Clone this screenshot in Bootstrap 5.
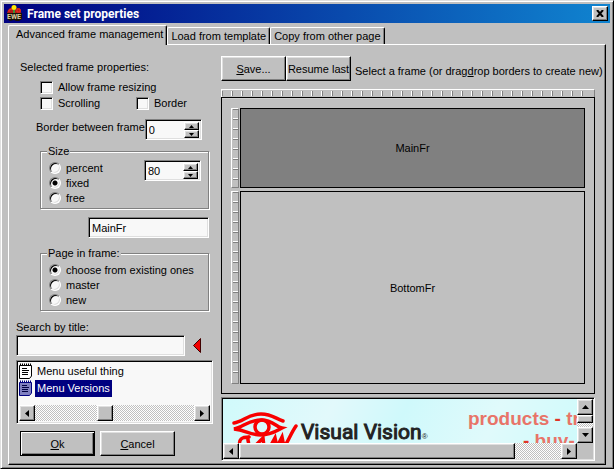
<!DOCTYPE html>
<html lang="en">
<head>
<meta charset="utf-8">
<meta name="viewport" content="width=device-width, initial-scale=1">
<title>Frame set properties</title>
<link href="https://cdn.jsdelivr.net/npm/bootstrap@5.3.0/dist/css/bootstrap.min.css" rel="stylesheet">
<style>
:root{--face:#c0c0c0;--shade:#808080;--field:#f8f8f8}
body{font:11px/16px "Liberation Sans",Arial,sans-serif;color:#000;background:var(--face)}
button,input{font:inherit;color:#000;border-radius:0}
svg{display:block}
.win{min-height:100vh;border:1px solid;border-color:#dfdfdf #000 #000 #dfdfdf;box-shadow:inset 1px 1px #fff,inset -1px -1px var(--shade);padding:3px}
.titlebar{height:19px;background:linear-gradient(90deg,#000080,#1084d0);color:#fff;font:bold 12px/16px Roboto,"Liberation Sans",sans-serif;padding:0 2px}
.raised{background:var(--face);border:1px solid;border-color:#fff #000 #000 #fff;box-shadow:inset -1px -1px var(--shade),inset 1px 1px #dfdfdf;padding:0}
.sunken{background:var(--field);border:1px solid;border-color:var(--shade) #fff #fff var(--shade);box-shadow:inset 1px 1px #000,inset -1px -1px #dfdfdf;border-radius:0}
.closer{width:16px;height:15px}
.tabs{padding:2px 4px 0}
.tabs button{background:var(--face);border:1px solid;border-color:#fff #000 transparent #fff;border-bottom:0;border-radius:2px 2px 0 0;box-shadow:inset -1px 0 var(--shade);height:17px;padding:0 3px;line-height:17px;white-space:nowrap}
.tabs .active{height:20px;margin-bottom:-1px;padding:0 3px 3px 7px;position:relative}
.pane{border:1px solid;border-color:#fff #000 #000 #fff;box-shadow:inset -1px -1px var(--shade);margin:0 4px;padding:0 10px 1px 7px;gap:8px}
.side{width:197px;flex:none;padding:14px 0 7px;white-space:nowrap}
.inset24{margin-left:24px;width:169px}
.border-row{margin-left:20px;width:165px}
.half{width:96px}
.tick{appearance:none;width:13px;height:13px;margin:0 5px 0 0}
.dot{appearance:none;width:12px;height:12px;margin:0 5px 0 0;border-radius:50%;background:var(--field);border:1px solid;border-color:var(--shade) #fff #fff var(--shade);box-shadow:inset 1px 1px #000,inset -1px -1px #dfdfdf}
.dot:checked{background:radial-gradient(circle,#000 2px,var(--field) 3px)}
.group{border:1px solid var(--shade);box-shadow:1px 1px #fff,inset 1px 1px #fff;padding:2px 7px 3px 8px}
.group legend{font-size:11px;line-height:14px;background:var(--face);padding:0 1px;margin:0 0 0 -2px}
.group label{height:15px}
.spin{width:57px;height:21px;padding:2px}
.spin input{width:0;flex:1;border:0;background:transparent;padding:0 0 0 1px;outline:0;line-height:16px}
.spin button{width:15px;height:8px;display:grid;place-items:center}
.field{height:21px;padding:0 3px;outline:0}
.name-field{width:121px}
.search{width:169px}
.list{height:64px;padding:2px}
.item{height:17px;gap:3px}
.item span{padding:0 2px;line-height:17px}
.item .chosen{background:#000080;color:#fff}
.track{background:repeating-conic-gradient(#fff 0 25%,var(--face) 0 50%) 0 0/2px 2px}
.arrow{width:16px;height:16px;flex:none;display:grid;place-items:center}
.knob{margin-left:62px}
.actions{margin-top:7px;gap:5px}
.cmd{width:75px;height:25px}
.primary{border-color:#000;box-shadow:inset 1px 1px #fff,inset -1px -1px #000,inset -2px -2px var(--shade)}
.work{min-width:0;padding:11px 0 2px}
.tool{width:65px;height:25px;white-space:nowrap}
.hint{margin:7px 0 0 4px;white-space:nowrap}
.ruler-x{height:8px;margin-top:8px;border-top:1px solid #fff;border-left:1px solid #fff;border-right:1px solid var(--shade);background:linear-gradient(90deg,#fff 1px,var(--shade) 1px 2px,transparent 2px) 9px 0/10px 5px;background-clip:content-box;background-origin:content-box;padding:1px 9px 1px 0}
.ruler-y{width:8px;border-left:1px solid #fff;border-top:1px solid #fff;border-bottom:1px solid var(--shade);border-right:1px solid var(--shade);background:linear-gradient(#fff 1px,var(--shade) 1px 2px,transparent 2px) 0 9px/5px 10px;background-clip:content-box;background-origin:content-box;padding:0 0 4px 1px}
.canvas{border:1px solid #000;padding:10px 9px 9px;gap:3px;box-shadow:inset 0 1px #d0d0d0}
.pane-row{gap:1px}
.top-row{height:80px;flex:none}
.frame-box{border:1px solid #000;background:var(--face);padding:0}
.top-row .frame-box{background:var(--shade)}
.preview{height:64px;margin-top:3px;padding:1px;display:grid;grid-template:minmax(0,1fr) 16px/minmax(0,1fr) 16px}
.page{background:linear-gradient(115deg,#d0fafb,#e2f9fb 30%,#cff9fb 50%,#e0fafb 75%,#cffafb);overflow:hidden}
.brand{font:21px/24px Roboto,"Liberation Sans",sans-serif;color:#222;-webkit-text-stroke:1px #222;white-space:nowrap;margin:21px 0 0 2px}
.brand small{font:8px/10px "Liberation Sans",sans-serif;-webkit-text-stroke:0}
.promo{font:bold 19px/22px "Liberation Sans",sans-serif;color:#e87468;white-space:nowrap;margin:9px 0 0 auto;width:109px;flex:none}
.promo b{color:#e03428}
.promo div + div{padding-left:55px}
</style>
<script src="https://cdn.jsdelivr.net/npm/bootstrap@5.3.0/dist/js/bootstrap.bundle.min.js"></script>
</head>
<body>
<main class="win d-flex flex-column">
  <header class="titlebar d-flex align-items-center">
    <svg width="17" height="17" viewBox="0 0 17 17" aria-hidden="true">
      <path d="M2 5L4 3H6L7 5H10L11 3H13L15 5V8L12 10H3L1 8Z" fill="#b01818"/>
      <path d="M3 7V5L6 4M11 4H14V7H11Z" stroke="#f03020" fill="none"/>
      <circle cx="8" cy="2.500" r="2.500" fill="#ffe800"/>
      <path d="M7 5H9V8H7Z" fill="#409030"/>
      <path d="M1 8H16V14L13 16H10L8 15L4 16L1 14Z" fill="#181008"/>
      <text x="1" y="14" font-size="7" font-weight="700" fill="#d8c8a0">EWE</text>
    </svg>
    <span class="ms-1 flex-grow-1">Frame set properties</span>
    <button class="raised closer d-flex align-items-center justify-content-center" type="button" aria-label="Close"><svg width="8" height="7" viewBox="0 0 8 7"><path d="M1 0L7 7M7 0L1 7" stroke="#000" stroke-width="2"/></svg></button>
  </header>
  <nav class="tabs d-flex align-items-end" role="tablist" aria-label="Frame sources">
    <button class="active" type="button" role="tab" aria-selected="true">Advanced frame management</button>
    <button type="button" role="tab" aria-selected="false">Load from template</button>
    <button type="button" role="tab" aria-selected="false">Copy from other page</button>
  </nav>
  <section class="pane d-flex flex-grow-1">
    <form class="side d-flex flex-column">
      <div class="ms-1">Selected frame properties:</div>
      <div class="inset24 mt-1 d-flex flex-wrap">
        <label class="d-flex align-items-center w-100"><input class="tick sunken" type="checkbox">Allow frame resizing</label>
        <label class="d-flex align-items-center half"><input class="tick sunken" type="checkbox">Scrolling</label>
        <label class="d-flex align-items-center"><input class="tick sunken" type="checkbox">Border</label>
      </div>
      <div class="border-row mt-2 d-flex justify-content-between">
        <label for="gap">Border between frame</label>
        <div class="spin sunken d-flex flex-shrink-0"><input id="gap" type="text" value="0"><div><button class="raised" type="button" aria-label="Increase border"><svg width="5" height="3"><path d="M0 3H5L2.5 0Z"/></svg></button><button class="raised" type="button" aria-label="Decrease border"><svg width="5" height="3"><path d="M0 0H5L2.5 3Z"/></svg></button></div></div>
      </div>
      <fieldset class="group inset24 mt-1">
        <legend class="float-none w-auto">Size</legend>
        <div class="d-flex justify-content-between">
          <div>
            <label class="d-flex align-items-center"><input class="dot" type="radio" name="size">percent</label>
            <label class="d-flex align-items-center"><input class="dot" type="radio" name="size" checked>fixed</label>
            <label class="d-flex align-items-center"><input class="dot" type="radio" name="size">free</label>
          </div>
          <div class="spin sunken d-flex"><input type="text" value="80" aria-label="Size value"><div><button class="raised" type="button" aria-label="Increase size"><svg width="5" height="3"><path d="M0 3H5L2.5 0Z"/></svg></button><button class="raised" type="button" aria-label="Decrease size"><svg width="5" height="3"><path d="M0 0H5L2.5 3Z"/></svg></button></div></div>
        </div>
      </fieldset>
      <div class="inset24 mt-2 d-flex justify-content-end"><input class="field name-field sunken" type="text" value="MainFr" aria-label="Frame name"></div>
      <fieldset class="group inset24 mt-2">
        <legend class="float-none w-auto">Page in frame:</legend>
        <label class="d-flex align-items-center"><input class="dot" type="radio" name="page" checked>choose from existing ones</label>
        <label class="d-flex align-items-center"><input class="dot" type="radio" name="page">master</label>
        <label class="d-flex align-items-center"><input class="dot" type="radio" name="page">new</label>
      </fieldset>
      <label for="find" class="mt-2">Search by title:</label>
      <div class="d-flex align-items-center">
        <input id="find" class="field sunken search" type="text">
        <svg class="ms-2" width="8" height="15" viewBox="0 0 8 15" aria-hidden="true"><path d="M7.5 .5V14.5L.5 7.5Z" fill="#f00000" stroke="#400000"/></svg>
      </div>
      <div class="list sunken mt-1 d-flex flex-column">
        <div class="item d-flex"><svg width="13" height="16" viewBox="0 0 13 16"><path d="M.5 2.5H12.5V13L10.5 15.5H.5Z" fill="#fff" stroke="#000"/><path d="M1 1.5H12" stroke="#000" stroke-width="2" stroke-dasharray="1 1"/><path d="M3 5.5H8M3 7.500H10M3 9.500H9M3 11.500H9" stroke="#000"/></svg><span>Menu useful thing</span></div>
        <div class="item d-flex"><svg width="13" height="16" viewBox="0 0 13 16"><path d="M.5 2.5H12.5V13L10.5 15.5H.5Z" fill="#8080c0" stroke="#000080"/><path d="M1 1.5H12" stroke="#000080" stroke-width="2" stroke-dasharray="1 1"/><path d="M3 5.5H8M3 7.500H10M3 9.500H9M3 11.500H9" stroke="#000040"/></svg><span class="chosen">Menu Versions</span></div>
        <div class="track d-flex mt-auto">
          <button class="raised arrow" type="button" aria-label="Scroll list left"><svg width="4" height="7"><path d="M4 0V7L0 3.5Z"/></svg></button>
          <div class="raised arrow knob"></div>
          <button class="raised arrow ms-auto" type="button" aria-label="Scroll list right"><svg width="4" height="7"><path d="M0 0V7L4 3.5Z"/></svg></button>
        </div>
      </div>
      <div class="actions d-flex ms-1">
        <button class="raised cmd primary" type="button"><u>O</u>k</button>
        <button class="raised cmd" type="button"><u>C</u>ancel</button>
      </div>
    </form>
    <div class="work flex-grow-1 d-flex flex-column">
      <div class="d-flex">
        <button class="raised tool flex-shrink-0" type="button"><u>S</u>ave...</button>
        <button class="raised tool flex-shrink-0" type="button">Resume last</button>
        <span class="hint">Select a frame (or drag<u>d</u>rop borders to create new)</span>
      </div>
      <div class="ruler-x"></div>
      <div class="canvas flex-grow-1 d-flex flex-column">
        <div class="pane-row top-row d-flex"><div class="ruler-y"></div><button class="frame-box flex-grow-1" type="button">MainFr</button></div>
        <div class="pane-row d-flex flex-grow-1"><div class="ruler-y"></div><button class="frame-box flex-grow-1" type="button">BottomFr</button></div>
      </div>
      <div class="preview sunken">
        <div class="page d-flex">
          <svg class="flex-shrink-0 ms-2" width="68" height="44" viewBox="231 398 68 44" fill="none" stroke="#f80000" stroke-width="3.500" stroke-linecap="round" aria-hidden="true">
            <path d="M234 422C243 421 248 413 261 413C272 413 276 418 283 420"/>
            <path d="M234 428C243 426 249 419 261 419C273 419 276 426 282 427C276 430 271 434 261 434C249 434 246 429 234 428Z"/>
            <circle cx="262" cy="426" r="7"/>
            <path d="M240 446C238 438 242 436 249 436M249 436C246 440 250 439 248 446M254 446L263 437L264 446M270 446L275 437L277 446L282 436L284 446C288 441 291 432 296 425"/>
          </svg>
          <div class="brand">Visual Vision<small>®</small></div>
          <div class="promo"><div>products <b>-</b> try</div><div><b>-</b> buy-</div></div>
        </div>
        <div class="track d-flex flex-column">
          <button class="raised arrow" type="button" aria-label="Scroll up"><svg width="7" height="4"><path d="M0 4H7L3.500 0Z"/></svg></button>
          <div class="raised" style="height:8px"></div>
          <button class="raised arrow mt-auto" type="button" aria-label="Scroll down"><svg width="7" height="4"><path d="M0 0H7L3.500 4Z"/></svg></button>
        </div>
        <div class="track d-flex">
          <button class="raised arrow" type="button" aria-label="Scroll left"><svg width="4" height="7"><path d="M4 0V7L0 3.500Z"/></svg></button>
          <div class="raised" style="width:78%"></div>
          <button class="raised arrow ms-auto" type="button" aria-label="Scroll right"><svg width="4" height="7"><path d="M0 0V7L4 3.500Z"/></svg></button>
        </div>
        <div style="background:#c0c0c0"></div>
      </div>
    </div>
  </section>
</main>
</body>
</html>
